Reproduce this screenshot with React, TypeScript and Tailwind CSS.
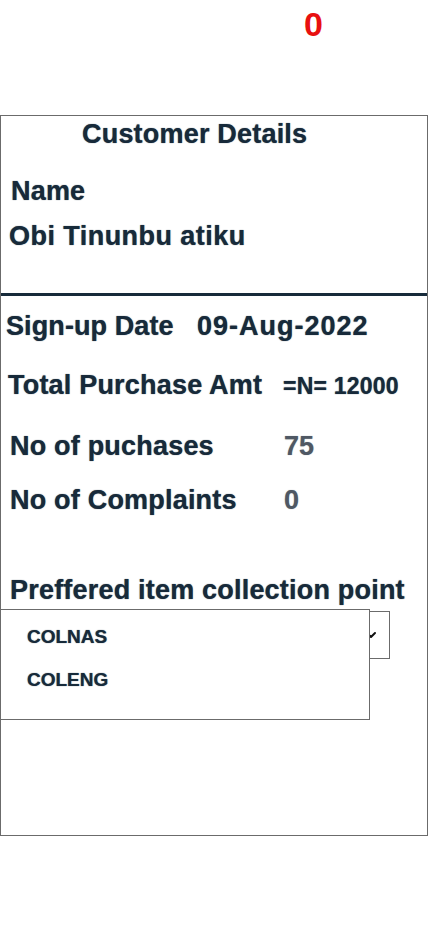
import { ChevronDown } from "lucide-react";

const ink = "text-[#172a3a] [text-shadow:0_0_1px_rgba(23,42,58,0.8)]";

const StatRow = ({ label, value, className }: { label: string; value: string; className?: string }) => {
  return (
    <div className={`flex items-baseline ${className}`}>
      <span className={`w-[274px] text-[27px] leading-[30px] font-bold tracking-[0.2px] ${ink}`}>{label}</span>
      <span className="text-[27px] leading-[30px] font-bold text-[#4f5864] [text-shadow:0_0_1px_rgba(79,88,100,0.6)]">
        {value}
      </span>
    </div>
  );
};

export default function App() {
  const options = ["COLNAS", "COLENG"];

  return (
    <div className="min-h-[926px] bg-white" style={{ fontFamily: '"Liberation Sans", Arial, sans-serif' }}>
      <div className="flex h-[115px] justify-end pr-[105px] pt-[5px]">
        <span className="text-[34px] leading-[38px] font-bold text-[#e81010]">0</span>
      </div>

      <div className="h-[721px] border border-[#6b6b6b]">
        <h2 className={`mt-[3px] pl-[81px] text-[27px] leading-[30px] font-bold tracking-[0.2px] ${ink}`}>
          Customer Details
        </h2>
        <p className={`mt-[27px] pl-[10px] text-[27px] leading-[30px] font-bold tracking-[0.2px] ${ink}`}>Name</p>
        <p className={`mt-[15px] pl-[8px] text-[27px] leading-[30px] font-bold tracking-[0.45px] ${ink}`}>
          Obi Tinunbu atiku
        </p>

        <div className="mt-[42px] h-[3px] bg-[#172a3a]" />

        <div className={`mt-[15px] flex pl-[5px] text-[27px] leading-[30px] font-bold ${ink}`}>
          <span className="w-[191px] tracking-[0.1px]">Sign-up Date</span>
          <span className="tracking-[1px]">09-Aug-2022</span>
        </div>

        <div className="mt-[29px] flex items-baseline pl-[7px]">
          <span className={`w-[275px] text-[27px] leading-[30px] font-bold tracking-[0.2px] ${ink}`}>
            Total Purchase Amt
          </span>
          <span className={`text-[23px] leading-[26px] font-bold tracking-[0.2px] ${ink}`}>=N= 12000</span>
        </div>

        <StatRow label="No of puchases" value="75" className="mt-[31px] pl-[9px]" />
        <StatRow label="No of Complaints" value="0" className="mt-[24px] pl-[9px]" />

        <p className={`mt-[60px] pl-[9px] text-[27px] leading-[30px] font-bold tracking-[0.2px] ${ink}`}>
          Preffered item collection point
        </p>

        <div className="relative pt-[6px]">
          <div className="flex h-[48px] w-[389px] items-center justify-end border border-[#6b6b6b] pr-[10px]">
            <ChevronDown size={16} strokeWidth={3} className="text-[#111]" />
          </div>

          <div className="absolute left-[-1px] top-[4px] h-[111px] w-[370px] border border-[#6b6b6b] bg-white pt-[16px]">
            {options.map((o) => (
              <div key={o} className={`h-[43px] pl-[26px] text-[19px] leading-[22px] font-bold ${ink}`}>
                {o}
              </div>
            ))}
          </div>
        </div>
      </div>
    </div>
  );
}
